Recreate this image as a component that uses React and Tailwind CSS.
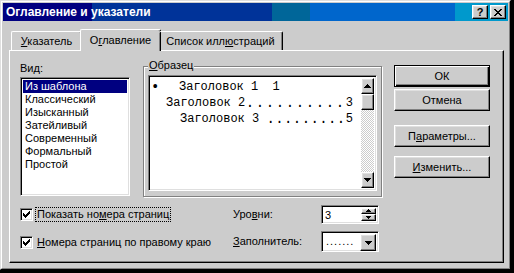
import React from 'react';

const raised =
  'border border-t-white border-l-white border-r-black border-b-black shadow-[inset_-1px_-1px_0_#808080,inset_1px_1px_0_#dfdfdf]';
const sunken =
  'border border-t-[#808080] border-l-[#808080] border-r-white border-b-white shadow-[inset_1px_1px_0_#000,inset_-1px_-1px_0_#dfdfdf]';

const styles = ['Из шаблона', 'Классический', 'Изысканный', 'Затейливый', 'Современный', 'Формальный', 'Простой'];

function Arrow({ down = false, small = false }) {
  if (small) {
    return (
      <svg width="5" height="3" viewBox="0 0 5 3" shapeRendering="crispEdges">
        <path
          d={down ? 'M0 0h5v1H0z M1 1h3v1H1z M2 2h1v1H2z' : 'M2 0h1v1H2z M1 1h3v1H1z M0 2h5v1H0z'}
          fill="#000"
        />
      </svg>
    );
  }
  return (
    <svg width="7" height="4" viewBox="0 0 7 4" shapeRendering="crispEdges">
      <path
        d={
          down
            ? 'M0 0h7v1H0z M1 1h5v1H1z M2 2h3v1H2z M3 3h1v1H3z'
            : 'M3 0h1v1H3z M2 1h3v1H2z M1 2h5v1H1z M0 3h7v1H0z'
        }
        fill="#000"
      />
    </svg>
  );
}

function Checkbox() {
  return (
    <div className={`${sunken} flex h-[13px] w-[13px] shrink-0 items-center justify-center bg-white`}>
      <svg width="7" height="7" viewBox="0 0 7 7" shapeRendering="crispEdges">
        <path
          d="M6 0h1v1H6z M5 1h2v1H5z M0 2h1v1H0z M4 2h3v1H4z M0 3h2v1H0z M3 3h3v1H3z M0 4h5v1H0z M1 5h3v1H1z M2 6h1v1H2z"
          fill="#000"
        />
      </svg>
    </div>
  );
}

function Button({ children, isDefault = false, className = '' }) {
  const frame = isDefault
    ? 'border border-black shadow-[inset_1px_1px_0_#fff,inset_-1px_-1px_0_#000,inset_-2px_-2px_0_#808080]'
    : raised;
  return (
    <div className={`${frame} flex h-[22px] w-[96px] items-center justify-center bg-[#cccccc] ${className}`}>
      {children}
    </div>
  );
}

export default function App() {
  return (
    <div className="h-[273px] w-[514px] bg-black font-[Liberation_Sans,Arial,sans-serif] text-[11px] leading-[13px] text-black">
      <div className="h-[270px] w-[511px] border border-t-[#dfdfdf] border-l-[#dfdfdf] border-r-black border-b-black bg-[#cccccc]">
        <div className="flex h-full flex-col border border-t-white border-l-white border-r-[#808080] border-b-[#808080] p-px">
          {/* title bar */}
          <div className="flex h-[18px] shrink-0 items-start bg-[linear-gradient(to_right,#000080_0_89px,#003399_89px_269px,#006699_269px_307px,#0066cc_307px_452px,#0099cc_452px)] pl-[3px] pr-[2px]">
            <div className="flex-1 pt-[2px] text-[12px] leading-[14px] font-bold text-white">Оглавление и указатели</div>
            <div className="mt-[2px] flex gap-[2px]">
              <div className={`${raised} flex h-[14px] w-[16px] items-center justify-center bg-[#cccccc] text-[11px] leading-[11px] font-bold`}>
                ?
              </div>
              <div className={`${raised} flex h-[14px] w-[16px] items-center justify-center bg-[#cccccc]`}>
                <svg width="8" height="7" viewBox="0 0 8 7" shapeRendering="crispEdges">
                  <path
                    d="M0 0h2v1H0z M6 0h2v1H6z M1 1h2v1H1z M5 1h2v1H5z M2 2h4v1H2z M3 3h2v1H3z M2 4h4v1H2z M1 5h2v1H1z M5 5h2v1H5z M0 6h2v1H0z M6 6h2v1H6z"
                    fill="#000"
                  />
                </svg>
              </div>
            </div>
          </div>

          {/* tabs */}
          <div className="relative z-10 ml-[8px] mt-[8px] flex h-[21px] items-end">
            <div className="flex h-[19px] w-[71px] items-center justify-center rounded-t-[2px] border-l border-t border-r border-l-white border-t-white border-r-black pt-px shadow-[inset_-1px_0_0_#808080]">
              <span>
                <u>У</u>казатель
              </span>
            </div>
            <div className="-mx-[2px] -mb-px flex h-[22px] w-[81px] items-start justify-center rounded-t-[2px] border-l border-t border-r border-l-white border-t-white border-r-black bg-[#cccccc] pt-[4px] shadow-[inset_-1px_0_0_#808080]">
              <span>
                О<u>г</u>лавление
              </span>
            </div>
            <div className="flex h-[19px] w-[124px] items-center justify-center rounded-t-[2px] border-t border-r border-t-white border-r-black pt-px shadow-[inset_-1px_0_0_#808080]">
              <span>
                Список илл<u>ю</u>страций
              </span>
            </div>
          </div>

          {/* panel */}
          <div className="ml-[6px] h-[213px] w-[495px] border border-t-white border-l-white border-r-black border-b-black pl-[10px] pt-[8px] shadow-[inset_-1px_-1px_0_#808080]">
            <div className="flex items-start">
              <div className="w-[110px]">
                <div className="mt-[3px] h-[13px]">
                  Ви<u>д</u>:
                </div>
                <div className={`${sunken} mt-[2px] h-[119px] bg-white p-[2px]`}>
                  {styles.map((s, i) => (
                    <div
                      key={s}
                      className={`h-[13px] pl-[2px] leading-[13px] ${i === 0 ? 'bg-[#000080] text-white' : ''}`}
                    >
                      {s}
                    </div>
                  ))}
                </div>
              </div>

              {/* sample group */}
              <div className="relative ml-[13px] mt-[7px] h-[131px] w-[239px] border border-[#808080] shadow-[inset_1px_1px_0_#fff,1px_1px_0_#fff]">
                <div className="absolute -top-[8px] left-[4px] bg-[#cccccc] px-px leading-[13px]">
                  <u>О</u>бразец
                </div>
                <div className={`${sunken} ml-[4px] mt-[8px] flex h-[116px] w-[229px] bg-white p-[2px]`}>
                  <div className="flex-1 pr-[8px] pt-[1px] font-[Liberation_Mono,monospace] text-[12px] leading-[16px]">
                    <div className="flex">
                      <span className="w-[28px] text-[14px]">•</span>
                      <span className="whitespace-pre">Заголовок 1  1</span>
                    </div>
                    <div className="flex pl-[15px]">
                      <span className="whitespace-pre">Заголовок 2</span>
                      <span className="flex-1 text-right text-[14px] tracking-[1.6px]">..........</span>
                      <span>3</span>
                    </div>
                    <div className="flex pl-[29px]">
                      <span className="whitespace-pre">Заголовок 3 </span>
                      <span className="flex-1 text-right text-[14px] tracking-[0.4px]">.........</span>
                      <span>5</span>
                    </div>
                  </div>
                  <div className="flex w-[16px] flex-col">
                    <div className={`${raised} flex h-[16px] items-center justify-center bg-[#cccccc]`}>
                      <Arrow />
                    </div>
                    <div className={`${raised} h-[16px] bg-[#cccccc]`} />
                    <div className="flex-1 bg-[repeating-conic-gradient(#cccccc_0_25%,#ffffff_0_50%)] bg-[length:2px_2px]" />
                    <div className={`${raised} flex h-[16px] items-center justify-center bg-[#cccccc]`}>
                      <Arrow down />
                    </div>
                  </div>
                </div>
              </div>

              {/* buttons */}
              <div className="ml-[12px] mt-[6px] flex flex-col">
                <Button isDefault>ОК</Button>
                <Button className="mt-[2px]">Отмена</Button>
                <Button className="mt-[14px]">
                  <span>
                    П<u>а</u>раметры...
                  </span>
                </Button>
                <Button className="mt-[9px]">
                  <span>
                    <u>И</u>зменить...
                  </span>
                </Button>
              </div>
            </div>

            {/* options */}
            <div className="mt-[7px] grid grid-cols-[213px_88px_58px] grid-rows-[20px_21px] items-center gap-y-[7px]">
              <div className="flex items-center">
                <Checkbox />
                <span className="ml-[2px] border border-dotted border-black px-px leading-[13px]">
                  Показать но<u>м</u>ера страниц
                </span>
              </div>
              <div>
                Уро<u>в</u>ни:
              </div>
              <div className={`${sunken} flex h-[19px] bg-white p-[2px]`}>
                <div className="flex-1 pl-[1px] leading-[15px]">3</div>
                <div className="flex w-[15px] flex-col">
                  <div className={`${raised} flex h-[8px] items-center justify-center bg-[#cccccc]`}>
                    <Arrow small />
                  </div>
                  <div className={`${raised} flex h-[7px] items-center justify-center bg-[#cccccc]`}>
                    <Arrow small down />
                  </div>
                </div>
              </div>

              <div className="flex items-center pt-[2px]">
                <Checkbox />
                <span className="ml-[4px]">
                  <u>Н</u>омера страниц по правому краю
                </span>
              </div>
              <div>
                <u>З</u>аполнитель:
              </div>
              <div className={`${sunken} flex h-[21px] bg-white p-[2px]`}>
                <div className="flex-1 pl-[2px] leading-[15px] tracking-[1px]">.......</div>
                <div className={`${raised} flex h-[17px] w-[16px] items-center justify-center bg-[#cccccc]`}>
                  <Arrow down />
                </div>
              </div>
            </div>
          </div>
        </div>
      </div>
    </div>
  );
}
